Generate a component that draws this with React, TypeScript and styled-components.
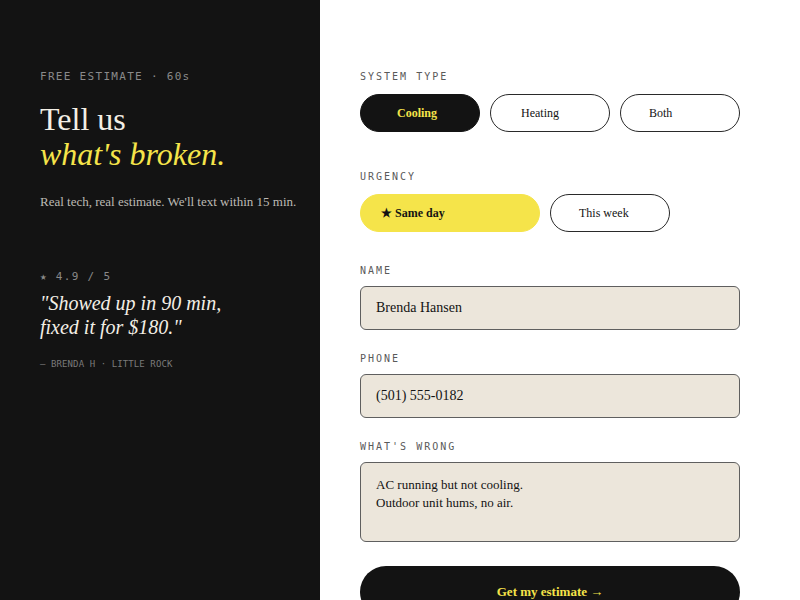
import styled, { createGlobalStyle } from "styled-components";

const GlobalStyle = createGlobalStyle`
    html, body {
        margin: 0;
        padding: 0;
        overflow: hidden;
        background: #FFFFFF;
    }
    * {
        box-sizing: border-box;
    }
`

const SERIF = `"Liberation Serif", "Times New Roman", serif`
const MONO = `"DejaVu Sans Mono", "Liberation Mono", monospace`
const YELLOW = '#F5E44A'
const INK = '#131313'

interface PillProps {
    $variant?: 'dark' | 'yellow' | 'outline';
    $width: number;
    $padLeft: number;
}

function App(){

    return(
        <>
            <GlobalStyle/>
            <Page>
                <Aside>
                    <Kicker>FREE ESTIMATE · 60s</Kicker>
                    <Headline>
                        Tell us<br/>
                        <Accent>what's broken.</Accent>
                    </Headline>
                    <Lead>Real tech, real estimate. We'll text within 15 min.</Lead>
                    <Rating>★ 4.9 / 5</Rating>
                    <Quote>"Showed up in 90 min,<br/>fixed it for $180."</Quote>
                    <Attribution>— BRENDA H · LITTLE ROCK</Attribution>
                </Aside>

                <Form onSubmit={e => e.preventDefault()}>
                    <Section $mb={38}>
                        <FieldLabel $gap={10}>SYSTEM TYPE</FieldLabel>
                        <PillRow>
                            <Pill type="button" $variant="dark" $width={120} $padLeft={36}>Cooling</Pill>
                            <Pill type="button" $width={120} $padLeft={30}>Heating</Pill>
                            <Pill type="button" $width={120} $padLeft={28}>Both</Pill>
                        </PillRow>
                    </Section>

                    <Section $mb={32}>
                        <FieldLabel $gap={10}>URGENCY</FieldLabel>
                        <PillRow>
                            <Pill type="button" $variant="yellow" $width={180} $padLeft={20}>★ Same day</Pill>
                            <Pill type="button" $width={120} $padLeft={28}>This week</Pill>
                        </PillRow>
                    </Section>

                    <Section $mb={22}>
                        <FieldLabel $gap={8}>NAME</FieldLabel>
                        <TextInput type="text" defaultValue="Brenda Hansen"/>
                    </Section>

                    <Section $mb={22}>
                        <FieldLabel $gap={8}>PHONE</FieldLabel>
                        <TextInput type="tel" defaultValue="(501) 555-0182"/>
                    </Section>

                    <Section $mb={24}>
                        <FieldLabel $gap={8}>WHAT'S WRONG</FieldLabel>
                        <TextArea defaultValue={"AC running but not cooling.\nOutdoor unit hums, no air."}/>
                    </Section>

                    <SubmitButton type="submit">Get my estimate →</SubmitButton>
                </Form>
            </Page>
        </>
    )
}


const Page = styled.div`
    display: flex;
    width: 800px;
    height: 600px;
    overflow: hidden;
`

const Aside = styled.aside`
    display: flex;
    flex-direction: column;
    align-items: flex-start;
    flex: 0 0 320px;
    height: 600px;
    background: ${INK};
    padding: 69px 16px 0px 40px;
`

const Kicker = styled.p`
    margin: 0;
    font-family: ${MONO};
    font-size: 11px;
    line-height: 16px;
    letter-spacing: 1.3px;
    color: #8A8A8A;
`

const Headline = styled.h1`
    margin: 17px 0px 0px 0px;
    font-family: ${SERIF};
    font-weight: 400;
    font-size: 32px;
    line-height: 35px;
    letter-spacing: 0px;
    color: #F3EFE6;
`

const Accent = styled.em`
    color: ${YELLOW};
    font-style: italic;
`

const Lead = styled.p`
    margin: 21px 0px 0px 0px;
    font-family: ${SERIF};
    font-size: 13px;
    line-height: 18px;
    color: #BDBAB3;
`

const Rating = styled(Kicker)`
    margin-top: 58px;
`

const Quote = styled.blockquote`
    margin: 6px 0px 0px 0px;
    font-family: ${SERIF};
    font-style: italic;
    font-size: 20px;
    line-height: 24px;
    color: #F3EFE6;
`

const Attribution = styled.p`
    margin: 19px 0px 0px 0px;
    font-family: ${MONO};
    font-size: 9px;
    line-height: 12px;
    letter-spacing: 0.1px;
    color: #7A7A7A;
`

const Form = styled.form`
    display: flex;
    flex-direction: column;
    flex: 1;
    padding: 70px 60px 0px 40px;
    background: #FFFFFF;
`

const Section = styled.div<{ $mb: number }>`
    display: flex;
    flex-direction: column;
    margin-bottom: ${p => p.$mb}px;
`

const FieldLabel = styled.label<{ $gap: number }>`
    font-family: ${MONO};
    font-size: 10px;
    line-height: 14px;
    letter-spacing: 2px;
    color: #5A5A5A;
    margin-bottom: ${p => p.$gap}px;
`

const PillRow = styled.div`
    display: flex;
    gap: 10px;
`

const Pill = styled.button<PillProps>`
    display: flex;
    align-items: center;
    width: ${p => p.$width}px;
    height: 38px;
    padding: 0px 0px 0px ${p => p.$padLeft}px;
    border-radius: 19px;
    font-family: ${SERIF};
    font-size: 12px;
    cursor: pointer;
    ${p => p.$variant === 'dark' && `
        background: ${INK};
        border: 1.5px solid ${INK};
        color: ${YELLOW};
        font-weight: 700;
    `}
    ${p => p.$variant === 'yellow' && `
        background: ${YELLOW};
        border: 1.5px solid ${YELLOW};
        color: ${INK};
        font-weight: 700;
    `}
    ${p => (!p.$variant || p.$variant === 'outline') && `
        background: #FFFFFF;
        border: 1.5px solid #2A2A2A;
        color: ${INK};
        font-weight: 400;
    `}
`

const TextInput = styled.input`
    width: 380px;
    height: 44px;
    padding: 0px 15px;
    border: 1.5px solid #5F5F5F;
    border-radius: 6px;
    background: #ECE6DB;
    font-family: ${SERIF};
    font-size: 14px;
    color: ${INK};
    outline: none;
`

const TextArea = styled.textarea`
    width: 380px;
    height: 80px;
    padding: 13px 15px 11px 15px;
    border: 1.5px solid #5F5F5F;
    border-radius: 6px;
    background: #ECE6DB;
    font-family: ${SERIF};
    font-size: 13px;
    line-height: 18px;
    color: ${INK};
    resize: none;
    outline: none;
`

const SubmitButton = styled.button`
    flex: 0 0 52px;
    width: 380px;
    height: 52px;
    border: none;
    border-radius: 26px;
    background: ${INK};
    color: ${YELLOW};
    font-family: ${SERIF};
    font-weight: 700;
    font-size: 13px;
    cursor: pointer;
`


export default App;
